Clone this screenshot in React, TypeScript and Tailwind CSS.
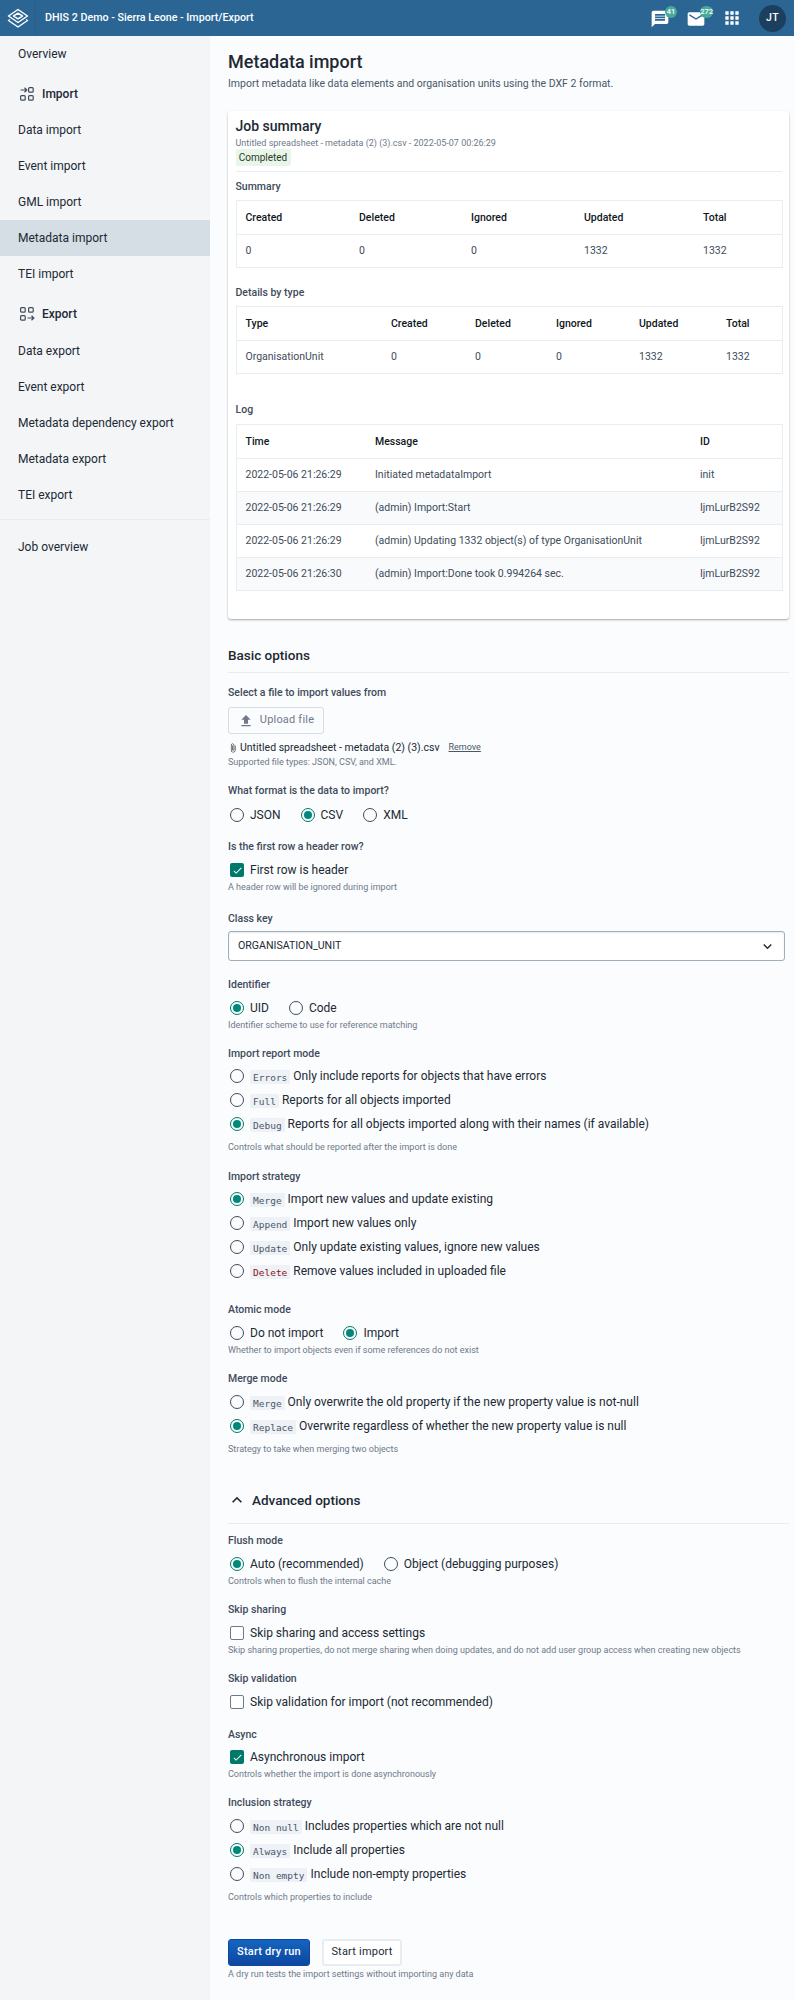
import { MdMessage, MdEmail, MdApps, MdFileUpload, MdAttachFile, MdExpandLess, MdKeyboardArrowDown, MdCheck } from "react-icons/md";
import type { ReactNode } from "react";

const navClass = "h-9 flex items-center px-[18px] text-[12px] text-[#212934]";

const NavItem = ({ label, active }: { label: string; active?: boolean }) => (
  <div className={active ? navClass + " bg-[#d5dde5]" : navClass}>{label}</div>
);

const ImportIcon = () => (
  <svg width="16" height="16" viewBox="0 0 16 16" fill="none" stroke="#404b5a" strokeWidth="1.2">
    <path d="M1.5 4h6M5.5 1.8 7.8 4 5.5 6.2" />
    <rect x="9.6" y="1.6" width="4.6" height="4.6" rx="1" />
    <rect x="1.6" y="9.6" width="4.6" height="4.6" rx="1" />
    <rect x="9.6" y="9.6" width="4.6" height="4.6" rx="1" />
  </svg>
);

const ExportIcon = () => (
  <svg width="16" height="16" viewBox="0 0 16 16" fill="none" stroke="#404b5a" strokeWidth="1.2">
    <rect x="1.6" y="1.6" width="4.6" height="4.6" rx="1" />
    <rect x="9.6" y="1.6" width="4.6" height="4.6" rx="1" />
    <rect x="1.6" y="9.6" width="4.6" height="4.6" rx="1" />
    <path d="M8.5 12h6M12.5 9.8l2.3 2.2-2.3 2.2" />
  </svg>
);

const Logo = () => (
  <svg width="22" height="22" viewBox="0 0 22 22" fill="none" stroke="#fff" strokeWidth="1.5" strokeLinejoin="round">
    <path d="M11 2.5 20.5 9 11 15.5 1.5 9Z" />
    <path d="M11 6.2 15.5 9 11 11.8 6.5 9Z" />
    <path d="M3 12.5 1.5 13.5 11 20 20.5 13.5 19 12.5" />
  </svg>
);

const Radio = ({ checked }: { checked?: boolean }) =>
  checked ? (
    <span className="w-[14px] h-[14px] rounded-full border-[1.5px] border-[#00796b] flex items-center justify-center shrink-0">
      <span className="w-[8px] h-[8px] rounded-full bg-[#00897b]" />
    </span>
  ) : (
    <span className="w-[14px] h-[14px] rounded-full border-[1.5px] border-[#404b5a] shrink-0" />
  );

const Check = ({ checked }: { checked?: boolean }) =>
  checked ? (
    <span className="w-[14px] h-[14px] rounded-[2px] bg-[#00796b] flex items-center justify-center shrink-0">
      <MdCheck className="text-white w-[11px] h-[11px]" />
    </span>
  ) : (
    <span className="w-[14px] h-[14px] rounded-[2px] border-[1.5px] border-[#6e7a8a] bg-white shrink-0" />
  );

const Code = ({ children, danger }: { children: ReactNode; danger?: boolean }) => (
  <code
    className={
      "bg-[#eef1f5] px-[3px] py-[1.5px] rounded-[1px] mr-[3px] text-[9.5px] font-['DejaVu_Sans_Mono',monospace] " +
      (danger ? "text-[#891515]" : "text-[#4a5768]")
    }
  >
    {children}
  </code>
);

const Option = ({ checked, code, danger, children }: { checked?: boolean; code?: string; danger?: boolean; children: ReactNode }) => (
  <label className="h-6 flex items-center gap-[6px] pl-[2px] text-[12px] text-[#212934]">
    <Radio checked={checked} />
    <span>
      {code && <Code danger={danger}>{code}</Code>}
      {children}
    </span>
  </label>
);

const CheckRow = ({ checked, children }: { checked?: boolean; children: ReactNode }) => (
  <label className="h-6 flex items-center gap-[6px] pl-[2px] text-[12px] text-[#212934]">
    <Check checked={checked} />
    {children}
  </label>
);

const Label = ({ children, className }: { children: ReactNode; className?: string }) => (
  <div className={"h-4 leading-4 text-[10.5px] font-medium text-[#404b5a] " + (className || "")}>{children}</div>
);

const Help = ({ children, className }: { children: ReactNode; className?: string }) => (
  <div className={"text-[9px] leading-[10px] text-[#6e7a8a] " + (className || "")}>{children}</div>
);

const DataTable = ({ head, rows, widths, className }: { head: string[]; rows: string[][]; widths: number[]; className?: string }) => (
  <table className={"w-[546px] table-fixed border border-[#e8edf2] bg-white text-[10.5px] text-[#212934] " + (className || "")}>
    <colgroup>
      {widths.map((w, i) => (
        <col key={i} style={{ width: w }} />
      ))}
    </colgroup>
    <thead>
      <tr className="h-[34px] border-b border-[#e8edf2]">
        {head.map((h) => (
          <th key={h} className="text-left font-medium pl-[9px] text-[#0f1722]">
            {h}
          </th>
        ))}
      </tr>
    </thead>
    <tbody>
      {rows.map((r, i) => (
        <tr key={i} className={"h-[33px] border-b border-[#e8edf2] last:border-b-0 " + (i % 2 ? "bg-[#f8fafc]" : "")}>
          {r.map((c, j) => (
            <td key={j} className="pl-[9px] text-[#404b5a]">
              {c}
            </td>
          ))}
        </tr>
      ))}
    </tbody>
  </table>
);

export default function App() {
  return (
    <div className="w-[794px] h-[2000px] overflow-hidden flex flex-col bg-[#fbfcfd] font-['Roboto',sans-serif]">
      <header className="h-9 shrink-0 bg-[#2b6594] flex items-center text-white">
        <div className="w-9 h-9 flex items-center justify-center border-r border-[#27608e]">
          <Logo />
        </div>
        <span className="ml-[9px] text-[10.7px] font-medium">DHIS 2 Demo - Sierra Leone - Import/Export</span>
        <div className="ml-auto flex items-center">
          <span className="relative w-9 flex justify-center">
            <MdMessage className="w-[20px] h-[20px] mt-[2px]" />
            <span className="absolute -top-[1px] right-[1px] min-w-[12px] h-3 rounded-full bg-[#48a999] text-[7.5px] font-medium flex items-center justify-center">41</span>
          </span>
          <span className="relative w-9 flex justify-center">
            <MdEmail className="w-[20px] h-[20px] mt-[2px]" />
            <span className="absolute -top-[1px] right-[1px] min-w-[12px] h-3 rounded-full bg-[#48a999] text-[7.5px] font-medium flex items-center justify-center">272</span>
          </span>
          <MdApps className="w-[20px] h-[20px] ml-[8px]" />
          <span className="w-[27px] h-[27px] ml-[17px] mr-[8px] rounded-full bg-[#1d3f5f] flex items-center justify-center text-[10.5px] font-medium tracking-[0.5px]">JT</span>
        </div>
      </header>
      <div className="flex flex-1">
        <aside className="w-[210px] shrink-0 bg-[#f3f5f7]">
          <NavItem label="Overview" />
          <div className="h-10 pt-[3px] flex items-center px-[19px] gap-[7px] text-[12px] font-medium text-[#212934]">
            <ImportIcon />
            Import
          </div>
          <NavItem label="Data import" />
          <NavItem label="Event import" />
          <NavItem label="GML import" />
          <NavItem label="Metadata import" active />
          <NavItem label="TEI import" />
          <div className="h-[41px] pt-[3px] flex items-center px-[19px] gap-[7px] text-[12px] font-medium text-[#212934]">
            <ExportIcon />
            Export
          </div>
          <NavItem label="Data export" />
          <NavItem label="Event export" />
          <NavItem label="Metadata dependency export" />
          <NavItem label="Metadata export" />
          <NavItem label="TEI export" />
          <div className="mt-[6px] mb-[9px] border-t border-[#e8edf2]" />
          <NavItem label="Job overview" />
        </aside>
        <main className="flex-1 pl-[18px] pr-[5px]">
          <h1 className="mt-[15px] text-[18px] leading-[22px] font-medium text-[#212934]">Metadata import</h1>
          <p className="mt-[3px] text-[10.5px] leading-[16px] text-[#4a5768]">Import metadata like data elements and organisation units using the DXF 2 format.</p>
          <section className="mt-[19px] w-[561px] h-[508px] bg-white rounded-[3px] shadow-[0_1px_2px_rgba(33,41,52,0.4)] px-[7.5px]">
            <h2 className="pt-[6px] text-[14px] leading-[18px] font-medium text-[#212934]">Job summary</h2>
            <p className="mt-[2px] text-[9px] leading-3 text-[#6e7a8a]">Untitled spreadsheet - metadata (2) (3).csv - 2022-05-07 00:26:29</p>
            <div className="h-[17px] w-[55px] bg-[#e8f5e9] rounded-[2px] flex items-center justify-center text-[10px] text-[#2a3a2c]">Completed</div>
            <div className="mt-[5px] border-t border-[#e8edf2]" />
            <Label className="mt-[7px]">Summary</Label>
            <DataTable
              className="mt-[5px]"
              widths={[114, 112, 113, 119, 88]}
              head={["Created", "Deleted", "Ignored", "Updated", "Total"]}
              rows={[["0", "0", "0", "1332", "1332"]]}
            />
            <Label className="mt-[17px]">Details by type</Label>
            <DataTable
              className="mt-[5px]"
              widths={[146, 84, 81, 83, 87, 65]}
              head={["Type", "Created", "Deleted", "Ignored", "Updated", "Total"]}
              rows={[["OrganisationUnit", "0", "0", "0", "1332", "1332"]]}
            />
            <Label className="mt-[28px]">Log</Label>
            <DataTable
              className="mt-[6px]"
              widths={[130, 325, 91]}
              head={["Time", "Message", "ID"]}
              rows={[
                ["2022-05-06 21:26:29", "Initiated metadataImport", "init"],
                ["2022-05-06 21:26:29", "(admin) Import:Start", "IjmLurB2S92"],
                ["2022-05-06 21:26:29", "(admin) Updating 1332 object(s) of type OrganisationUnit", "IjmLurB2S92"],
                ["2022-05-06 21:26:30", "(admin) Import:Done took 0.994264 sec.", "IjmLurB2S92"],
              ]}
            />
          </section>

          <h2 className="mt-[26px] text-[13.5px] leading-5 font-medium text-[#212934]">Basic options</h2>
          <div className="mt-[7px] border-t border-[#e8edf2]" />
          <Label className="mt-[12px]">Select a file to import values from</Label>
          <button className="mt-[6px] w-[96px] h-[27px] border border-[#d5dde5] rounded-[3px] bg-[#fbfcfd] flex items-center justify-center gap-[6px] text-[11px] tracking-[0.2px] text-[#6e7a8a]">
            <MdFileUpload className="w-[16px] h-[16px] text-[#6e7a8a]" />
            Upload file
          </button>
          <div className="mt-[6px] h-4 flex items-center text-[10.5px] text-[#212934]">
            <MdAttachFile className="w-[10px] h-[10px] mr-[2px]" />
            Untitled spreadsheet - metadata (2) (3).csv
            <span className="ml-[9px] text-[9px] underline text-[#4a5768]">Remove</span>
          </div>
          <Help className="mt-[1px]">Supported file types: JSON, CSV, and XML.</Help>

          <Label className="mt-[16px]">What format is the data to import?</Label>
          <div className="mt-[4px] flex gap-[18px]">
            <Option>JSON</Option>
            <Option checked>CSV</Option>
            <Option>XML</Option>
          </div>

          <Label className="mt-[12px]">Is the first row a header row?</Label>
          <div className="mt-[3px]"><CheckRow checked>First row is header</CheckRow></div>
          <Help>A header row will be ignored during import</Help>

          <Label className="mt-[19px]">Class key</Label>
          <div className="mt-[4px] w-[557px] h-[30px] border border-[#a0adba] rounded-[3px] bg-white shadow-[inset_0_1px_2px_rgba(33,41,52,0.1)] flex items-center justify-between pl-[9px] pr-[8px] text-[10.6px] text-[#212934]">
            ORGANISATION_UNIT
            <MdKeyboardArrowDown className="w-[17px] h-[17px]" />
          </div>

          <Label className="mt-[16px]">Identifier</Label>
          <div className="mt-[3px] flex gap-[18px]">
            <Option checked>UID</Option>
            <Option>Code</Option>
          </div>
          <Help>Identifier scheme to use for reference matching</Help>

          <Label className="mt-[16px]">Import report mode</Label>
          <div className="mt-[2px]">
            <Option code="Errors">Only include reports for objects that have errors</Option>
            <Option code="Full">Reports for all objects imported</Option>
            <Option checked code="Debug">Reports for all objects imported along with their names (if available)</Option>
          </div>
          <Help className="mt-[6px]">Controls what should be reported after the import is done</Help>

          <Label className="mt-[17px]">Import strategy</Label>
          <div className="mt-[2px]">
            <Option checked code="Merge">Import new values and update existing</Option>
            <Option code="Append">Import new values only</Option>
            <Option code="Update">Only update existing values, ignore new values</Option>
            <Option code="Delete" danger>Remove values included in uploaded file</Option>
          </div>

          <Label className="mt-[19px]">Atomic mode</Label>
          <div className="mt-[3px] flex gap-[18px]">
            <Option>Do not import</Option>
            <Option checked>Import</Option>
          </div>
          <Help>Whether to import objects even if some references do not exist</Help>

          <Label className="mt-[16px]">Merge mode</Label>
          <div className="mt-[3px]">
            <Option code="Merge">Only overwrite the old property if the new property value is not-null</Option>
            <Option checked code="Replace">Overwrite regardless of whether the new property value is null</Option>
          </div>
          <Help className="mt-[6px]">Strategy to take when merging two objects</Help>

          <div className="mt-[36px] h-5 flex items-center gap-[5px] text-[13.5px] leading-5 font-medium text-[#212934]">
            <MdExpandLess className="w-[20px] h-[20px] -ml-[1px]" />
            Advanced options
          </div>
          <div className="mt-[13px] border-t border-[#e8edf2]" />

          <Label className="mt-[9px]">Flush mode</Label>
          <div className="mt-[3px] flex gap-[18px]">
            <Option checked>Auto (recommended)</Option>
            <Option>Object (debugging purposes)</Option>
          </div>
          <Help>Controls when to flush the internal cache</Help>

          <Label className="mt-[16px]">Skip sharing</Label>
          <div className="mt-[3px]"><CheckRow>Skip sharing and access settings</CheckRow></div>
          <Help>Skip sharing properties, do not merge sharing when doing updates, and do not add user group access when creating new objects</Help>

          <Label className="mt-[16px]">Skip validation</Label>
          <div className="mt-[3px]"><CheckRow>Skip validation for import (not recommended)</CheckRow></div>

          <Label className="mt-[13px]">Async</Label>
          <div className="mt-[2px]"><CheckRow checked>Asynchronous import</CheckRow></div>
          <Help>Controls whether the import is done asynchronously</Help>

          <Label className="mt-[16px]">Inclusion strategy</Label>
          <div className="mt-[3px]">
            <Option code="Non null">Includes properties which are not null</Option>
            <Option checked code="Always">Include all properties</Option>
            <Option code="Non empty">Include non-empty properties</Option>
          </div>
          <Help className="mt-[6px]">Controls which properties to include</Help>

          <div className="mt-[37px] flex gap-3">
            <button className="w-[82px] h-[27px] rounded-[3px] bg-gradient-to-b from-[#1565c0] to-[#0d47a1] border border-[#0d47a1] text-white text-[11px] font-medium tracking-[0.2px]">Start dry run</button>
            <button className="w-[80px] h-[27px] rounded-[3px] border-2 border-[#e8edf2] bg-white text-[11px] tracking-[0.2px] text-[#212934]">Start import</button>
          </div>
          <Help className="mt-[3px]">A dry run tests the import settings without importing any data</Help>
        </main>
      </div>
    </div>
  );
}
